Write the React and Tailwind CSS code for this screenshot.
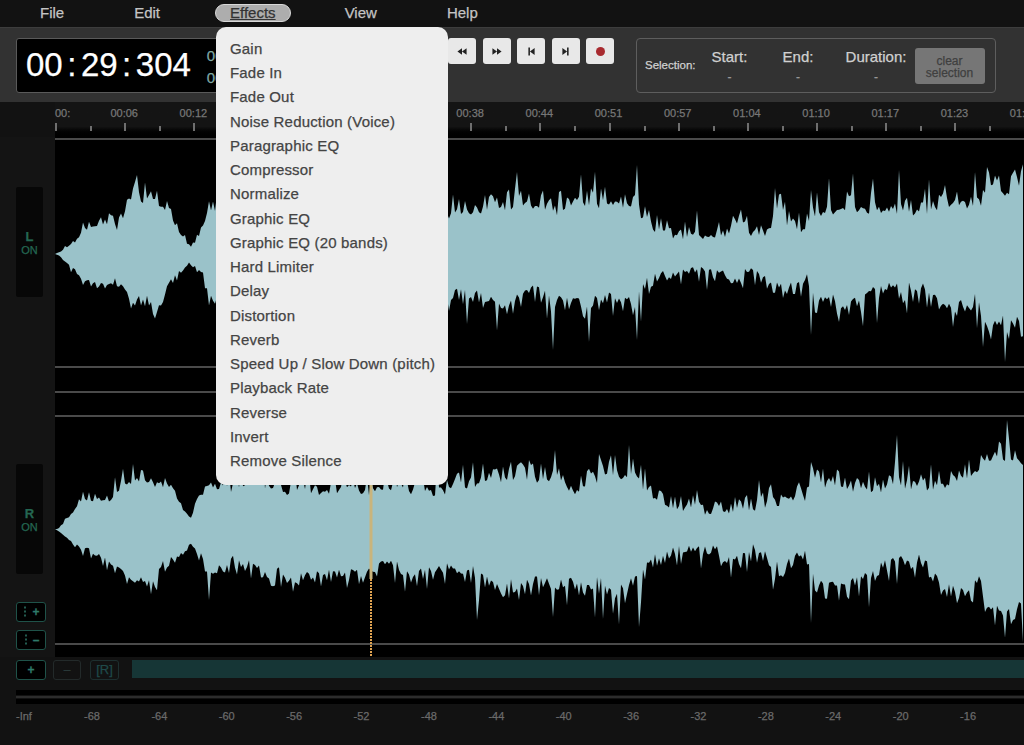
const EFFECTS = [
  "Gain", "Fade In", "Fade Out", "Noise Reduction (Voice)", "Paragraphic EQ", "Compressor",
  "Normalize", "Graphic EQ", "Graphic EQ (20 bands)", "Hard Limiter", "Delay", "Distortion",
  "Reverb", "Speed Up / Slow Down (pitch)", "Playback Rate", "Reverse", "Invert", "Remove Silence",
]

const TIMES = ["00:", "00:06", "00:12", "00:19", "00:25", "00:32", "00:38", "00:44", "00:51", "00:57", "01:04", "01:10", "01:17", "01:23", "01:30"]
const DB = ["-68", "-64", "-60", "-56", "-52", "-48", "-44", "-40", "-36", "-32", "-28", "-24", "-20", "-16"]

// envelope points [x, y], page coordinates
const L_TOP = [[55,254],[60,252],[77,238],[83,226],[113,220],[117,227],[127,206],[137,184],[143,205],[150,193],[167,209],[190,247],[200,234],[208,207],[300,205],[448,211],[477,204],[516,201],[552,207],[607,200],[637,201],[643,220],[663,231],[712,236],[738,225],[760,231],[783,214],[807,228],[811,207],[850,203],[898,209],[961,199],[982,199],[986,178],[1008,190],[1024,172]]
const L_BOT = [[55,254],[60,256],[83,281],[110,286],[117,279],[133,305],[143,296],[157,312],[170,283],[190,262],[203,276],[210,300],[300,300],[448,296],[462,290],[503,308],[533,294],[552,303],[589,301],[637,302],[645,286],[667,275],[708,271],[738,280],[753,273],[783,295],[809,279],[811,296],[846,308],[880,292],[924,292],[954,312],[976,300],[984,328],[1024,322]]
const R_TOP = [[55,529],[58,529],[73,511],[83,501],[113,498],[123,484],[140,476],[150,482],[170,484],[190,517],[200,499],[207,482],[300,487],[448,486],[477,477],[500,473],[552,474],[570,490],[604,471],[637,471],[652,496],[708,508],[757,506],[798,493],[809,493],[812,477],[879,486],[898,477],[920,490],[976,468],[984,454],[1024,456]]
const R_BOT = [[55,529],[58,531],[77,547],[100,557],[133,582],[157,584],[160,567],[183,553],[190,543],[203,560],[208,580],[233,564],[283,578],[333,578],[370,575],[375,563],[413,577],[440,570],[477,574],[496,590],[529,583],[585,583],[626,592],[641,576],[652,558],[708,547],[738,565],[755,549],[783,568],[809,557],[812,580],[842,590],[880,566],[924,563],[954,596],[980,583],[987,614],[1024,608]]

// single tall spikes that stand out, x must be odd (sample grid)
const L_TOP_PEAKS = { 137: 175, 517: 172, 637: 165, 811: 190, 899: 170 }
const L_BOT_PEAKS = { 553: 350, 589: 342, 637: 340, 811: 335, 1005: 362 }
const R_TOP_PEAKS = { 141: 470, 811: 462, 897: 435, 1007: 420 }
const R_BOT_PEAKS = { 209: 600, 477: 620, 553: 617, 639: 627, 811: 623 }

function makeRand(seed) {
  let s = seed
  return () => {
    s = (s * 16807) % 2147483647
    return s / 2147483647
  }
}

function edge(points, seed, dir, center, peaks) {
  const rand = makeRand(seed)
  const out = []
  let i = 0
  for (let x = 55; x <= 1024; x += 2) {
    while (i < points.length - 2 && points[i + 1][0] < x) i++
    const [x0, y0] = points[i]
    const [x1, y1] = points[i + 1]
    const base = y0 + ((y1 - y0) * (x - x0)) / (x1 - x0)
    const amp = Math.min(1, Math.abs(base - center) / 28) * (x < 210 ? 0.55 : 1)
    const r = rand()
    const spike = r > 0.96 ? 22 + rand() * 18 : r * r * 24
    const dip = 3 + rand() * 7
    const y = peaks[x] ?? base + dir * (spike - dip) * amp
    out.push([x - 55, y - 137])
  }
  return out
}

function wavePoints(top, bot, seed, center, topPeaks, botPeaks) {
  const a = edge(top, seed, -1, center, topPeaks)
  const b = edge(bot, seed + 77, 1, center, botPeaks).reverse()
  return [...a, ...b].map(([x, y]) => `${x},${y.toFixed(1)}`).join(" ")
}

const LEFT_WAVE = wavePoints(L_TOP, L_BOT, 4211, 254, L_TOP_PEAKS, L_BOT_PEAKS)
const RIGHT_WAVE = wavePoints(R_TOP, R_BOT, 9173, 529, R_TOP_PEAKS, R_BOT_PEAKS)

function Waveform() {
  return (
    <svg width="969" height="520" viewBox="0 0 969 520" className="block">
      <rect x="0" y="1" width="969" height="2" fill="#4a4a4a" />
      <rect x="0" y="229" width="969" height="2" fill="#4a4a4a" />
      <rect x="0" y="254" width="969" height="2" fill="#4a4a4a" />
      <rect x="0" y="278" width="969" height="2" fill="#4a4a4a" />
      <rect x="0" y="506" width="969" height="2" fill="#4a4a4a" />
      <polygon points={LEFT_WAVE} fill="#9ac2c9" className="blur-[0.4px]" />
      <polygon points={RIGHT_WAVE} fill="#9ac2c9" className="blur-[0.4px]" />
      <line x1="316" y1="345" x2="316" y2="442" stroke="#c9b47c" strokeWidth="3" />
      <line x1="316" y1="442" x2="316" y2="520" stroke="#e0a452" strokeWidth="2" strokeDasharray="2 1" />
    </svg>
  )
}

function TransportButton({ children }) {
  return (
    <div className="flex h-[26px] w-[28px] items-center justify-center rounded-[3px] bg-[#e8e8e8]">
      {children}
    </div>
  )
}

function VZoomIcon() {
  return (
    <svg width="6" height="12" viewBox="0 0 6 12" className="text-[#2f7a6a]">
      <path d="M3 0.5 V11.5" stroke="currentColor" strokeWidth="1.5" strokeDasharray="2 2" />
    </svg>
  )
}

function ChannelBlock({ name }) {
  return (
    <div className="flex h-[110px] w-[27px] flex-col items-center justify-center rounded-[2px] bg-[#070707] text-[#246752]">
      <span className="text-[13px] font-bold leading-[15px]">{name}</span>
      <span className="text-[11px] leading-[12px]">ON</span>
    </div>
  )
}

function TrackButton({ children }) {
  return (
    <div className="flex h-[20px] w-[30px] items-center justify-center gap-[4px] rounded-[3px] border border-[#1f5249] bg-black text-[12px] font-bold leading-none text-[#2f7a6a]">
      {children}
    </div>
  )
}

export default function App() {
  return (
    <div className="relative flex h-[745px] w-[1024px] flex-col overflow-hidden bg-[#121212] font-['Liberation_Sans',Arial,sans-serif] [-webkit-text-stroke:0.25px]">
      {/* menu bar */}
      <div className="flex h-[27px] items-center pb-[1px] pl-[40px] text-[15px] text-[#c4c4c4]">
        <span>File</span>
        <span className="ml-[70px]">Edit</span>
        <span className="ml-[55px] rounded-full border border-[#d8d8d8] bg-[#adadad] px-[14px] text-[15px] leading-[16px] text-[#333] underline">
          Effects
        </span>
        <span className="ml-[54px]">View</span>
        <span className="ml-[70px]">Help</span>
      </div>

      {/* toolbar */}
      <div className="flex h-[75px] items-start border-t border-[#3d3d3d] bg-[#323232] pl-[16px] pt-[10px]">
        <div className="flex h-[55px] w-[284px] shrink-0 items-center rounded-[3px] border border-[#5a5a5a] bg-black pl-[9px]">
          <div className="mb-[2px] flex gap-[4.5px] text-[33px] leading-none text-white">
            <span>00</span>
            <span>:</span>
            <span>29</span>
            <span>:</span>
            <span>304</span>
          </div>
          <div className="ml-[16px] mt-[2px] flex flex-col gap-[5px] text-[15px] leading-[17px] text-[#7fa8a4]">
            <span>00:00:000</span>
            <span>00:00:000</span>
          </div>
        </div>

        <div className="ml-[148px] flex gap-[6.5px]">
          <TransportButton>
            <svg width="10" height="7" viewBox="0 0 12 8"><path d="M6 0 V8 L0.5 4 Z M11.5 0 V8 L6 4 Z" fill="#222" /></svg>
          </TransportButton>
          <TransportButton>
            <svg width="10" height="7" viewBox="0 0 12 8"><path d="M0.5 0 V8 L6 4 Z M6 0 V8 L11.5 4 Z" fill="#222" /></svg>
          </TransportButton>
          <TransportButton>
            <svg width="7" height="9" viewBox="0 0 9 10"><path d="M0.5 0 H2.5 V10 H0.5 Z M8.5 0.5 V9.5 L2.5 5 Z" fill="#222" /></svg>
          </TransportButton>
          <TransportButton>
            <svg width="7" height="9" viewBox="0 0 9 10"><path d="M6.5 0 H8.5 V10 H6.5 Z M0.5 0.5 V9.5 L6.5 5 Z" fill="#222" /></svg>
          </TransportButton>
          <TransportButton>
            <div className="h-[9px] w-[9px] rounded-full bg-[#a82a2f]" />
          </TransportButton>
        </div>

        <div className="ml-[22px] flex h-[55px] w-[360px] items-center rounded-[4px] border border-[#5e5e5e] pl-[8px] text-[#d0d0d0]">
          <span className="text-[11.5px]">Selection:</span>
          <div className="ml-[16px] flex w-[36px] flex-col items-center gap-[5px]">
            <span className="text-[15px] leading-[17px]">Start:</span>
            <span className="text-[12px] leading-[14px] text-[#999]">-</span>
          </div>
          <div className="ml-[36px] flex w-[29px] flex-col items-center gap-[5px]">
            <span className="text-[15px] leading-[17px]">End:</span>
            <span className="text-[12px] leading-[14px] text-[#999]">-</span>
          </div>
          <div className="ml-[33px] flex w-[61px] flex-col items-center gap-[5px]">
            <span className="text-[15px] leading-[17px]">Duration:</span>
            <span className="text-[12px] leading-[14px] text-[#999]">-</span>
          </div>
          <div className="ml-[8px] flex h-[36px] w-[70px] items-center justify-center rounded-[3px] bg-[#767676] pt-[2px] text-center text-[12px] leading-[12px] text-[#3f3f3f]">
            clear
            <br />
            selection
          </div>
        </div>
      </div>

      {/* timeline */}
      <div className="flex h-[35px] overflow-hidden pl-[55px]">
        <div className="flex h-full bg-gradient-to-b from-[#141414] from-70% to-black">
          {TIMES.map((t, i) => (
            <div key={t} className="w-[69.2px] shrink-0">
              <div className={i === 0 ? "h-[21px] pt-[5px] text-[11px] leading-[13px] text-[#777]" : "-ml-[15px] h-[21px] w-[30px] pt-[5px] text-center text-[11px] leading-[13px] text-[#777]"}>
                {t}
              </div>
              <div className="flex items-end">
                <div className="h-[8px] w-[2px] bg-[#6f6f6f]" />
                <div className="ml-[33px] h-[5px] w-[2px] bg-[#6f6f6f]" />
              </div>
            </div>
          ))}
        </div>
      </div>

      {/* tracks */}
      <div className="flex h-[520px]">
        <div className="flex w-[55px] shrink-0 flex-col bg-[#141414] pl-[16px]">
          <div className="mt-[50px]">
            <ChannelBlock name="L" />
          </div>
          <div className="mt-[167px]">
            <ChannelBlock name="R" />
          </div>
          <div className="mt-[28px]">
            <TrackButton>
              <VZoomIcon />
              <span>+</span>
            </TrackButton>
          </div>
          <div className="mt-[8px]">
            <TrackButton>
              <VZoomIcon />
              <span>–</span>
            </TrackButton>
          </div>
        </div>
        <div className="flex-1 bg-black">
          <Waveform />
        </div>
      </div>

      {/* scroll row */}
      <div className="mt-[3px] flex h-[20px] items-start pl-[16px]">
        <TrackButton>+</TrackButton>
        <div className="ml-[7px] flex h-[20px] w-[28px] items-center justify-center rounded-[3px] border border-[#232a2a] text-[12px] text-[#2a3a3a]">
          –
        </div>
        <div className="ml-[9px] flex h-[20px] w-[29px] items-center justify-center rounded-[3px] border border-[#1d2f2f] text-[13px] text-[#1f4a4a]">
          [R]
        </div>
        <div className="ml-[13px] h-[18px] flex-1 bg-[#163636]" />
      </div>

      {/* level meter */}
      <div className="ml-[16px] mt-[10px] flex h-[14px] flex-col justify-between">
        <div className="h-[5px] bg-black" />
        <div className="h-[2px] bg-[#2c2c2c]" />
        <div className="h-[5px] bg-black" />
      </div>
      <div className="mt-[6px] flex pl-[16px] text-[11px] leading-[13px] text-[#6a6a6a]">
        <div className="w-[42.3px] shrink-0">-Inf</div>
        {DB.map((d) => (
          <div key={d} className="w-[67.4px] shrink-0 text-center">
            {d}
          </div>
        ))}
      </div>

      {/* effects dropdown */}
      <div className="absolute left-[216px] top-[27px] w-[232px] rounded-[10px] bg-[#eeeeee] pb-[12px] pl-[14px] pt-[10px] text-[15px] leading-[24.24px] tracking-[0.18px] text-[#444]">
        {EFFECTS.map((e) => (
          <div key={e}>{e}</div>
        ))}
      </div>
    </div>
  )
}
